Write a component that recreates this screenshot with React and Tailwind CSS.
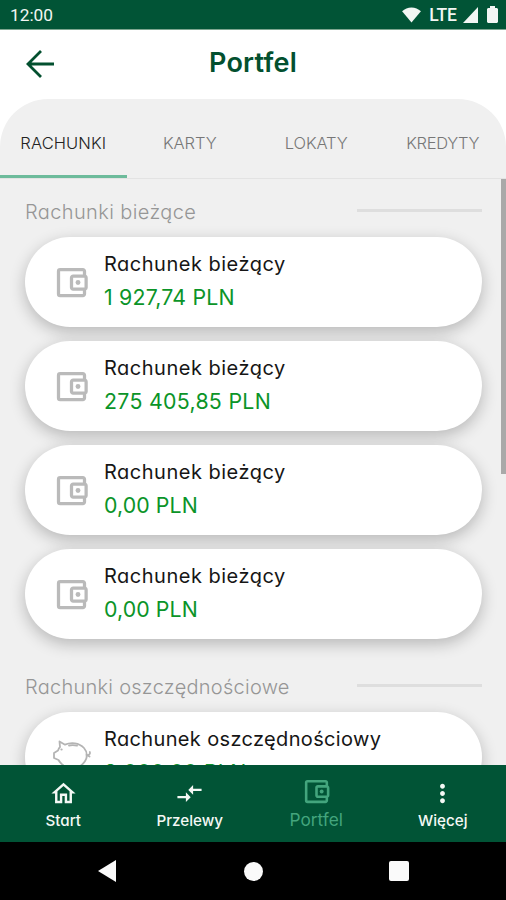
import { MdOutlineAccountBalanceWallet, MdOutlineHome, MdCompareArrows, MdMoreVert } from "react-icons/md";

const tabs = [
  { label: "RACHUNKI", active: true, spacing: "tracking-[0.1px]" },
  { label: "KARTY", spacing: "tracking-[-0.1px]" },
  { label: "LOKATY", spacing: "tracking-[-0.1px]" },
  { label: "KREDYTY", spacing: "tracking-[-0.35px]" },
];

const accounts = [
  { amount: "1 927,74 PLN", spacing: "tracking-[0.2px]" },
  { amount: "275 405,85 PLN", spacing: "tracking-[0.3px]" },
  { amount: "0,00 PLN", spacing: "tracking-[0.1px]" },
  { amount: "0,00 PLN", spacing: "tracking-[0.1px]" },
];

function PiggyIcon() {
  return (
    <svg className="relative top-px" width="39" height="36" viewBox="0 0 39 36" fill="none" stroke="#b4b4b4" strokeWidth="1.8" strokeLinejoin="round" strokeLinecap="round">
      <path d="M7.500 1.500l5.500 3.200c6-2.600 14-2 19 3.300 1.800 2 2.800 4.500 2.800 7.200 0 5-2.800 7.800-5.800 10.300v5h-5v-3h-8v3h-5v-5.500c-2-1.500-3.500-3-4.500-5l-4.500-2v-5l4-2.500c.5-1.500 1-2.500 2-3.500z" />
      <path d="M17 5.500c3-.6 5-.6 8 .200M34.500 15c2.500.5 4-1 3.300-3M34.500 15l3 1.500" />
      <path d="M9.500 9.500h.1" strokeWidth="2.200" />
    </svg>
  );
}

function SectionTitle({ children, spacing }) {
  return (
    <div className="flex h-[30px] items-center justify-between text-[20px] text-[#969696]">
      <span className={"font-light " + spacing}>{children}</span>
      <span className="mb-1 h-[3px] w-[125px] bg-[#dedede]" />
    </div>
  );
}

function Card({ name, amount, icon, nameSpacing, amountSpacing }) {
  return (
    <div className="flex h-[90px] shrink-0 items-center rounded-full bg-white pl-[27px] shadow-[0_5px_16px_rgba(0,0,0,0.24)]">
      <div className="flex w-[39px] shrink-0 justify-center text-[#bababa]">{icon}</div>
      <div className="ml-[13px] flex flex-col pb-[3px] whitespace-nowrap">
        <span className={"h-[33px] text-[20px] leading-[33px] text-[#161616] " + nameSpacing}>{name}</span>
        <span className={"h-[33px] text-[21.3px] leading-[33px] text-[#0b9428] " + amountSpacing}>{amount}</span>
      </div>
    </div>
  );
}

function NavItem({ icon, label, className }) {
  return (
    <div className={"flex flex-1 flex-col items-center text-[#f4f8f5] " + className}>
      {icon}
      <span className="mt-[2px] leading-[22px]">{label}</span>
    </div>
  );
}

export default function App() {
  return (
    <div className="flex h-[900px] w-[506px] flex-col overflow-hidden bg-white font-['Inter','Noto_Sans',sans-serif] [font-feature-settings:'cv11']">
      <div className="flex h-[30px] shrink-0 items-center justify-between border-b border-[#7da690] bg-[#015436] pr-[8px] pl-[10px] font-['Roboto',sans-serif] text-[#f2f6f3]">
        <span className="pt-[3px] text-[17.3px]">12:00</span>
        <div className="flex items-center">
          <svg width="19" height="16" viewBox="0 0 20 17" fill="currentColor"><path d="M0 4.500C2.800 2 6.200.5 10 .5s7.200 1.500 10 4L10 16.500z" /></svg>
          <span className="ml-[8px] pt-[2px] text-[17.5px] font-medium">LTE</span>
          <svg className="ml-[6px]" width="15" height="16" viewBox="0 0 15 16" fill="currentColor"><path d="M15 0v16H0z" /></svg>
          <svg className="ml-[9px]" width="11" height="17" viewBox="0 0 11 17" fill="currentColor"><path d="M3 0h5v2h2l1 1v13l-1 1H1l-1-1V3l1-1h2z" /></svg>
        </div>
      </div>

      <header className="grid h-[69px] shrink-0 grid-cols-[1fr_auto_1fr] items-center pr-[26px] pb-[2px] pl-[26px] text-[#03502f]">
        <svg width="29" height="28" viewBox="0 0 29 28" fill="none" stroke="currentColor" strokeWidth="2.800"><path d="M28 14H2M15 1L2 14l13 13" /></svg>
        <h1 className="text-[27px] font-semibold tracking-[0.2px]">Portfel</h1>
      </header>

      <main className="flex min-h-0 flex-1 flex-col overflow-hidden rounded-t-[48px] bg-[#f0f0f0]">
        <nav className="grid h-[80px] shrink-0 grid-cols-4 border-b border-[#e3e3e3] text-[16.500px]">
          {tabs.map((t) => (
            <div
              key={t.label}
              className={
                "flex items-center justify-center border-b-[3px] pt-[13px] text-[16.5px] font-light " +
                (t.active ? "border-[#6dbb9b] text-[#222222]" : "border-transparent text-[#777777]")
              }
            >
              <span className={t.spacing}>{t.label}</span>
            </div>
          ))}
        </nav>
        <div className="flex min-h-0 flex-1 justify-between">
          <div className="ml-[25px] flex w-[457px] flex-col pt-[18px]">
            <SectionTitle spacing="tracking-[0.38px]">Rachunki bieżące</SectionTitle>
            <div className="mt-[10px] flex flex-col gap-[14px]">
              {accounts.map((a, i) => (
                <Card key={i} name="Rachunek bieżący" amount={a.amount} nameSpacing="tracking-[0.5px]" amountSpacing={a.spacing} icon={<MdOutlineAccountBalanceWallet size={39} />} />
              ))}
            </div>
            <div className="mt-[33px]">
              <SectionTitle spacing="tracking-[0.26px]">Rachunki oszczędnościowe</SectionTitle>
            </div>
            <div className="mt-[10px]">
              <Card name="Rachunek oszczędnościowy" amount="2 000,00 PLN" nameSpacing="tracking-[0.35px]" amountSpacing="tracking-[0.3px]" icon={<PiggyIcon />} />
            </div>
          </div>
          <div className="h-[295px] w-[5px] bg-[#a9a9a9]" />
        </div>
      </main>

      <nav className="z-10 flex h-[77px] shrink-0 bg-[#015436] text-[15.2px] font-medium">
        <NavItem className="pt-[14px]" icon={<MdOutlineHome size={29} />} label="Start" />
        <NavItem className="pt-[14px]" icon={<MdCompareArrows size={29} />} label="Przelewy" />
        <NavItem className="pt-[11px] text-[17.3px] font-normal text-[#43a57d]!" icon={<MdOutlineAccountBalanceWallet size={31} />} label="Portfel" />
        <NavItem className="pt-[14px]" icon={<MdMoreVert size={29} />} label="Więcej" />
      </nav>

      <footer className="grid h-[58px] shrink-0 grid-cols-3 items-center bg-black px-[34px] text-[#fafafa]">
        <svg className="mx-auto" width="18" height="22" viewBox="0 0 18 22" fill="currentColor"><path d="M18 0v22L0 11z" /></svg>
        <span className="mx-auto h-[19px] w-[19px] rounded-full bg-[#fafafa]" />
        <span className="mx-auto h-[20px] w-[20px] rounded-[2px] bg-[#fafafa]" />
      </footer>
    </div>
  );
}
